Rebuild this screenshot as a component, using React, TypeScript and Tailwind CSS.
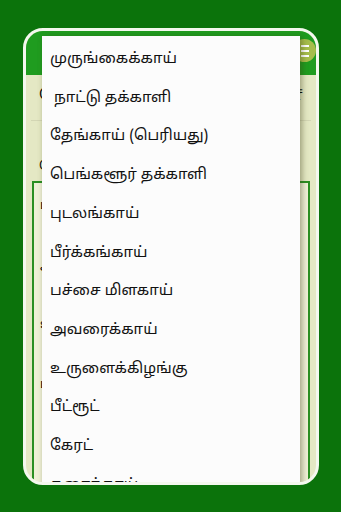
const items = [
  "முருங்கைக்காய்",
  "\u00a0நாட்டு தக்காளி",
  "தேங்காய் (பெரியது)",
  "பெங்களூர் தக்காளி",
  "புடலங்காய்",
  "பீர்க்கங்காய்",
  "பச்சை மிளகாய்",
  "அவரைக்காய்",
  "உருளைக்கிழங்கு",
  "பீட்ரூட்",
  "கேரட்",
  "சுரைக்காய்",
];

export default function App() {
  return (
    <div
      className="w-[341px] h-[512px] bg-[#0b730b] pt-[28px] pl-[23px] overflow-hidden"
      style={{ fontFamily: '"Noto Sans Tamil", "Noto Sans", sans-serif' }}
    >
      <div className="relative w-[296px] h-[457px] border-[3px] border-[#f4f8ee] rounded-[20px] overflow-hidden bg-[#e4e8c4] flex flex-col">
        {/* header */}
        <div className="h-[44px] bg-[#1f9c1f] shrink-0 relative">
          <div className="absolute left-[267px] top-[8px] w-[23px] h-[23px] rounded-full bg-[#a6bd4c] flex flex-col items-center justify-center gap-[3px]">
            <span className="w-[8px] h-[2px] bg-white" />
            <span className="w-[8px] h-[2px] bg-white" />
            <span className="w-[8px] h-[2px] bg-white" />
          </div>
        </div>

        {/* page behind the menu */}
        <div className="flex-1 flex flex-col px-[5px]">
          <div className="h-[46px] border-b border-[#d3d6b4] flex items-center justify-between px-[8px] text-[15px] text-black">
            <span>தேங்காய்</span>
            <span>₹</span>
          </div>
          <div className="h-[60px] flex items-end justify-between px-[8px] pb-[4px] text-[13px]">
            <span>பெங்</span>
          </div>
          <div className="flex-1 border-2 border-b-0 border-[#2a8f22] bg-[#eef0d6] mx-[1px] flex flex-col gap-[40px] pt-[14px] px-[6px] text-[13px]">
            <span>புட</span>
            <span>அவ</span>
            <span>உரு</span>
            <span>பீட்</span>
          </div>
        </div>

        {/* dropdown */}
        <div className="absolute left-[16px] top-[5px] w-[258px] h-[470px] pt-[5px] bg-[#fcfcfc] shadow-[2px_1px_6px_rgba(60,60,20,0.45)] flex flex-col">
          {items.map((t) => (
            <div
              key={t}
              className="h-[38.7px] shrink-0 flex items-center pl-[8px] text-[15px] text-[#111] whitespace-pre"
            >
              {t}
            </div>
          ))}
        </div>
      </div>
    </div>
  );
}
